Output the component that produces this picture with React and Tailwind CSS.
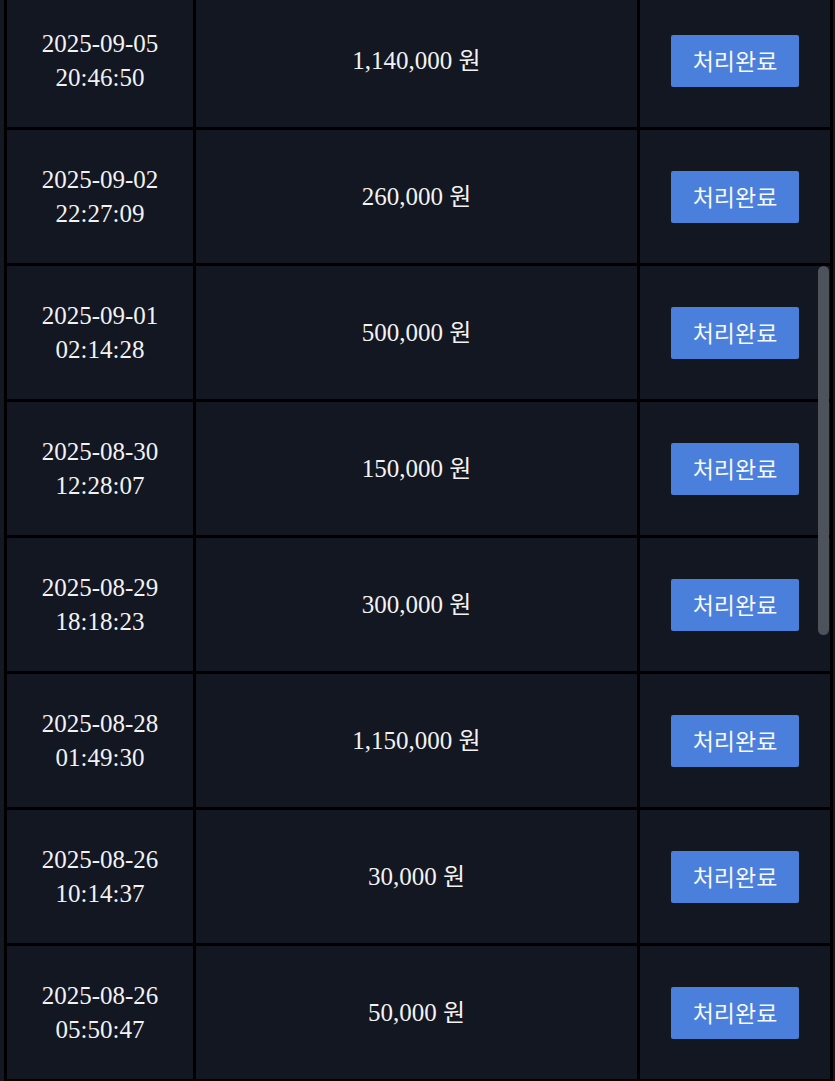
const rows = [
  { date: "2025-09-05", time: "20:46:50", amount: "1,140,000" },
  { date: "2025-09-02", time: "22:27:09", amount: "260,000" },
  { date: "2025-09-01", time: "02:14:28", amount: "500,000" },
  { date: "2025-08-30", time: "12:28:07", amount: "150,000" },
  { date: "2025-08-29", time: "18:18:23", amount: "300,000" },
  { date: "2025-08-28", time: "01:49:30", amount: "1,150,000" },
  { date: "2025-08-26", time: "10:14:37", amount: "30,000" },
  { date: "2025-08-26", time: "05:50:47", amount: "50,000" },
];

export default function App() {
  return (
    <div className="h-[1081px] overflow-hidden bg-[#141823] relative">
      <div className="ml-[4px] mt-[-9px] w-[829px] bg-black p-[3px]">
        <div className="grid grid-cols-[186px_441px_190px] gap-[3px]">
          {rows.map((row, i) => (
            <div key={i} className="contents">
              <div className="h-[133px] bg-[#131722] flex flex-col items-center justify-center text-[#f2f2f2] text-[25px] leading-[34px] font-['Liberation_Serif','Times_New_Roman',serif]">
                <span>{row.date}</span>
                <span>{row.time}</span>
              </div>
              <div className="h-[133px] bg-[#131722] flex items-center justify-center text-[#f2f2f2] text-[25px] font-['Liberation_Serif','Noto_Sans_CJK_KR',serif]">
                <span>
                  {row.amount}{" "}
                  <span className="font-['Noto_Sans_CJK_KR',sans-serif] text-[24px]">원</span>
                </span>
              </div>
              <div className="h-[133px] bg-[#131722] flex items-center justify-center">
                <button className="w-[128px] h-[52px] bg-[#4a7fdc] rounded-[2px] text-[#f7f7f7] text-[23px] font-['Noto_Sans_CJK_KR',sans-serif] leading-none">
                  처리완료
                </button>
              </div>
            </div>
          ))}
        </div>
      </div>
      <div className="absolute left-[818px] top-[266px] w-[11px] h-[369px] rounded-full bg-[#4e525b]" />
    </div>
  );
}
